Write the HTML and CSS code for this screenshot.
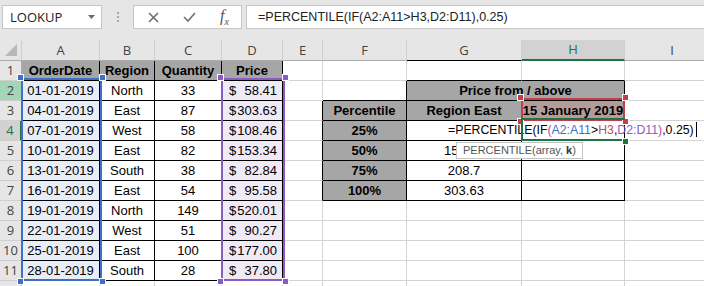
FILE: index.html
```html
<!DOCTYPE html>
<html lang="en">
<head>
    <meta charset="UTF-8">
    <title>PERCENTILE IF - Excel</title>
    <link rel="stylesheet" href="styles.css">
</head>
<body>
    <div class="formula-bar">
        <div class="name-box">
            <span>LOOKUP</span>
            <svg class="drop" width="7" height="4" viewBox="0 0 7 4"><path d="M0 0h7L3.5 4z"/></svg>
        </div>
        <div class="grip"><i></i><i></i><i></i></div>
        <div class="fx-buttons">
            <svg width="11" height="11" viewBox="0 0 11 11"><path d="M1 1L10 10M10 1L1 10"/></svg>
            <svg width="13" height="10" viewBox="0 0 13 10"><path d="M1 5l4 4 7-8"/></svg>
            <span class="fx">f<sub>x</sub></span>
        </div>
        <div class="formula-input">=PERCENTILE(IF(A2:A11&gt;H3,D2:D11),0.25)</div>
    </div>

    <div class="sheet">
        <table class="grid">
            <colgroup>
                <col class="c-rh"><col class="c-a"><col class="c-b"><col class="c-c"><col class="c-d">
                <col class="c-e"><col class="c-f"><col class="c-g"><col class="c-h"><col class="c-i">
            </colgroup>
            <tr class="col-heads">
                <th class="corner"><span class="tri"></span></th>
                <th>A</th><th>B</th><th>C</th><th>D</th><th>E</th><th>F</th>
                <th class="kb">G</th><th class="kb active">H</th><th>I</th>
            </tr>
            <tr>
                <th class="rh">1</th>
                <td class="k hd">OrderDate</td><td class="k hd">Region</td><td class="k hd">Quantity</td><td class="k hd">Price</td>
                <td></td><td></td><td class="kb"></td><td class="kb"></td><td></td>
            </tr>
            <tr>
                <th class="rh sel">2</th>
                <td class="k a">01-01-2019</td><td class="k">North</td><td class="k">33</td>
                <td class="k d"><div class="acct"><span>$</span><span>58.41</span></div></td>
                <td></td><td class="kb kr"></td><td class="k hd" colspan="2">Price from / above</td><td></td>
            </tr>
            <tr>
                <th class="rh">3</th>
                <td class="k a">04-01-2019</td><td class="k">East</td><td class="k">87</td>
                <td class="k d"><div class="acct"><span>$</span><span>303.63</span></div></td>
                <td class="kr"></td><td class="k hd">Percentile</td><td class="k hd">Region East</td><td class="k hd ref">15 January 2019</td><td></td>
            </tr>
            <tr>
                <th class="rh cur">4</th>
                <td class="k a">07-01-2019</td><td class="k">West</td><td class="k">58</td>
                <td class="k d"><div class="acct"><span>$</span><span>108.46</span></div></td>
                <td class="kr"></td><td class="k hd">25%</td>
                <td class="k edit">=PERCENTILE(IF<span class="p1">(</span><span class="r-a">A2:A11</span>&gt;<span class="r-h">H3</span>,<span class="r-d">D2:D11</span><span class="p1">)</span>,0.25)<span class="caret"></span></td>
                <td class="k"></td><td></td>
            </tr>
            <tr>
                <th class="rh">5</th>
                <td class="k a">10-01-2019</td><td class="k">East</td><td class="k">82</td>
                <td class="k d"><div class="acct"><span>$</span><span>153.34</span></div></td>
                <td class="kr"></td><td class="k hd">50%</td><td class="k">153.34</td><td class="k"></td><td></td>
            </tr>
            <tr>
                <th class="rh">6</th>
                <td class="k a">13-01-2019</td><td class="k">South</td><td class="k">38</td>
                <td class="k d"><div class="acct"><span>$</span><span>82.84</span></div></td>
                <td class="kr"></td><td class="k hd">75%</td><td class="k">208.7</td><td class="k"></td><td></td>
            </tr>
            <tr>
                <th class="rh">7</th>
                <td class="k a">16-01-2019</td><td class="k">East</td><td class="k">54</td>
                <td class="k d"><div class="acct"><span>$</span><span>95.58</span></div></td>
                <td class="kr"></td><td class="k hd">100%</td><td class="k">303.63</td><td class="k"></td><td></td>
            </tr>
            <tr>
                <th class="rh">8</th>
                <td class="k a">19-01-2019</td><td class="k">North</td><td class="k">149</td>
                <td class="k d"><div class="acct"><span>$</span><span>520.01</span></div></td>
                <td></td><td></td><td></td><td></td><td></td>
            </tr>
            <tr>
                <th class="rh">9</th>
                <td class="k a">22-01-2019</td><td class="k">West</td><td class="k">51</td>
                <td class="k d"><div class="acct"><span>$</span><span>90.27</span></div></td>
                <td></td><td></td><td></td><td></td><td></td>
            </tr>
            <tr>
                <th class="rh">10</th>
                <td class="k a">25-01-2019</td><td class="k">East</td><td class="k">100</td>
                <td class="k d"><div class="acct"><span>$</span><span>177.00</span></div></td>
                <td></td><td></td><td></td><td></td><td></td>
            </tr>
            <tr>
                <th class="rh">11</th>
                <td class="k a">28-01-2019</td><td class="k">South</td><td class="k">28</td>
                <td class="k d"><div class="acct"><span>$</span><span>37.80</span></div></td>
                <td></td><td></td><td></td><td></td><td></td>
            </tr>
            <tr>
                <th class="rh"></th>
                <td></td><td></td><td></td><td></td><td></td><td></td><td></td><td></td><td></td>
            </tr>
        </table>

        <!-- range highlights drawn over the grid while the formula is edited -->
        <div class="range blue"><i class="h tl"></i><i class="h tr"></i><i class="h bl"></i><i class="h br"></i></div>
        <div class="range purple"><i class="h tl"></i><i class="h tr"></i><i class="h bl"></i><i class="h br"></i></div>
        <div class="range red"><i class="h tl"></i><i class="h tr"></i><i class="h bl"></i><i class="h br"></i></div>
        <div class="active-cell"><i class="h br"></i></div>
        <div class="tip">PERCENTILE(array, <b>k</b>)</div>
    </div>
</body>
</html>
```

FILE: styles.css
```css
body {
    margin: 0;
    background: #fff;
    font-family: "Liberation Sans", Arial, sans-serif;
    overflow: hidden;
}

/* formula bar */
.formula-bar {
    display: flex;
    align-items: flex-start;
    height: 40px;
    padding: 5px 0 0 2px;
    box-sizing: border-box;
    background: #e6e6e6;
    font-family: "Open Sans", "Noto Sans", sans-serif;
}
.name-box, .fx-buttons, .formula-input {
    height: 24px;
    box-sizing: border-box;
    background: #fff;
    border: 1px solid #c6c6c6;
    display: flex;
    align-items: center;
}
.name-box {
    width: 100px;
    padding: 0 6px 0 7px;
    justify-content: space-between;
    font-size: 13px;
    color: #222;
}
.drop { fill: #6a6a6a; }
.grip {
    width: 31px;
    display: flex;
    flex-direction: column;
    align-items: center;
    gap: 2px;
    padding-top: 7px;
}
.grip i {
    width: 2px;
    height: 2px;
    background: #a8a8a8;
}
.fx-buttons {
    width: 109px;
    padding: 0 12px 0 14px;
    justify-content: space-between;
}
.fx-buttons svg {
    fill: none;
    stroke: #6e6e6e;
    stroke-width: 1.6;
}
.fx {
    font-family: "Liberation Serif", serif;
    font-style: italic;
    font-size: 16px;
    color: #555;
}
.fx sub { font-size: 10px; }
.formula-input {
    flex: 1;
    margin-left: 4px;
    border-right: none;
    padding-left: 11px;
    font-family: "Liberation Sans", sans-serif;
    font-size: 12.5px;
    color: #222;
}

/* sheet grid */
.sheet {
    position: relative;
}
.grid {
    border-collapse: separate;
    border-spacing: 0;
    table-layout: fixed;
    width: 720px;
    font-size: 13px;
}
.c-rh { width: 22px; }
.c-a { width: 78px; }
.c-b { width: 55px; }
.c-c { width: 67px; }
.c-d { width: 61px; }
.c-e { width: 40px; }
.c-f { width: 84px; }
.c-g { width: 115px; }
.c-h { width: 103px; }
.c-i { width: 95px; }

.grid tr { height: 20px; }
.grid td, .grid th {
    padding: 0;
    height: 19px;
    border-right: 1px solid #d4d4d4;
    border-bottom: 1px solid #d4d4d4;
    text-align: center;
    white-space: nowrap;
    color: #000;
    font-weight: normal;
    line-height: 19px;
}
.col-heads th {
    background: #e6e6e6;
    color: #444;
    border-right-color: #cfcfcf;
    border-bottom-color: #ababab;
    font-family: "Open Sans", sans-serif;
    font-size: 13px;
}
.col-heads th.active {
    background: #d2d2d2;
    color: #217346;
    border-bottom: 2px solid #217346;
    height: 18px;
}
.corner { position: relative; }
.tri {
    position: absolute;
    right: 4px;
    bottom: 4px;
    border-left: 12px solid transparent;
    border-bottom: 12px solid #b8b8b8;
}
.grid th.rh {
    background: #e6e6e6;
    color: #444;
    border-right-color: #ababab;
    border-bottom-color: #cfcfcf;
    font-family: "Open Sans", sans-serif;
    font-size: 13px;
}
.grid th.rh.sel { background: #a3d6b6; }
.grid th.rh.cur {
    background: #d2d2d2;
    color: #217346;
    border-right: 2px solid #217346;
}

/* black cell borders */
.grid .k { border-right-color: #000; border-bottom-color: #000; }
.grid .kb { border-bottom-color: #000; }
.grid .kr { border-right-color: #000; }

.grid .hd {
    background: #a6a6a6;
    font-weight: bold;
}
.grid .a { background: #e8eef8; }
.grid .d { background: #efeaf6; }
.grid .ref { background: #b49c9d; }
.acct {
    display: flex;
    justify-content: space-between;
    padding: 0 5px 0 7px;
}

.grid .edit {
    text-align: left;
    padding-left: 41px;
    font-size: 12.3px;
    overflow: visible;
}
.p1 { color: #b4469e; }
.r-a { color: #3f6fc6; }
.r-h { color: #c0504d; }
.r-d { color: #8a5cc3; }
.caret {
    display: inline-block;
    width: 1px;
    height: 15px;
    margin-left: 2px;
    vertical-align: -3px;
    background: #000;
}

/* range highlights */
.range {
    position: absolute;
    box-sizing: border-box;
    border: 2px solid;
}
.range.blue { left: 21px; top: 38px; width: 81px; height: 203px; border-color: #3f6fc6; }
.range.purple { left: 221px; top: 38px; width: 64px; height: 203px; border-color: #8a5cc3; }
.range.red { left: 521px; top: 58px; width: 104px; height: 23px; border-color: #c43e4a; }
.h {
    position: absolute;
    width: 5px;
    height: 5px;
    border: 1px solid #fff;
    background: inherit;
}
.range.blue .h { background: #3f6fc6; }
.range.purple .h { background: #8a5cc3; }
.range.red .h { background: #c43e4a; }
.h.tl { left: -6px; top: -6px; }
.h.tr { right: -6px; top: -6px; }
.h.bl { left: -6px; bottom: -6px; }
.h.br { right: -6px; bottom: -6px; }

.active-cell {
    position: absolute;
    left: 521px;
    top: 78px;
    width: 104px;
    height: 23px;
    box-sizing: border-box;
    border: 2px solid #217346;
    border-right: none;
}
.active-cell .h { background: #217346; right: -4px; }

.tip {
    position: absolute;
    left: 456px;
    top: 102px;
    height: 17px;
    padding: 0 6px;
    background: #fff;
    border: 1px solid #c4c4c4;
    font-family: "Liberation Sans", sans-serif;
    font-size: 11px;
    line-height: 15px;
    color: #555;
    box-sizing: border-box;
}
.tip b { color: #333; }
```
